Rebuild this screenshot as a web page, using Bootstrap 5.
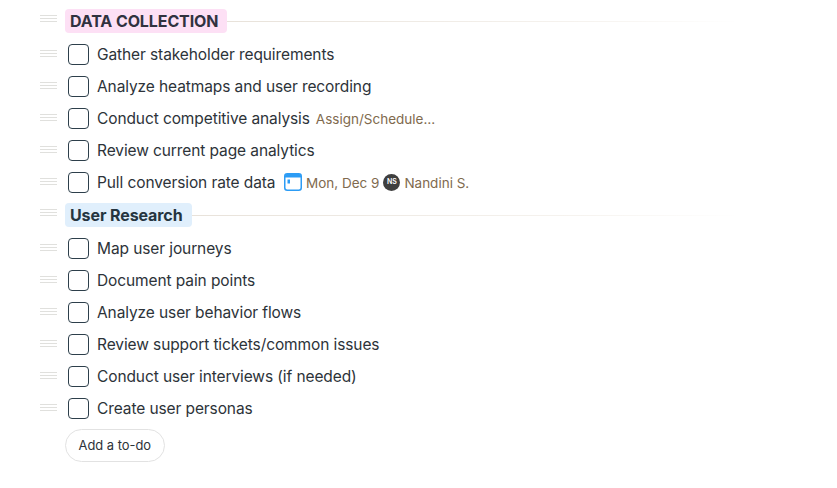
<!DOCTYPE html>
<html lang="en">
<head>
  <meta charset="UTF-8">
  <title>To-do list</title>
  <link href="https://cdn.jsdelivr.net/npm/bootstrap@5.3.3/dist/css/bootstrap.min.css" rel="stylesheet">
  <style>
    body { font-family: Inter, "Liberation Sans", sans-serif; color: #2d3339; font-size: 16px; background: #fff; }
    .todo-page { padding: 4px 0 0 40px; width: 740px; }
    .todo-row { height: 32px; }
    .head-row { height: 34px; }
    .grip { width: 17px; height: 7px; margin-right: 8px; flex: none; border-top: 1px solid #e0e0dd; border-bottom: 1px solid #e0e0dd; position: relative; top: -1px; }
    .grip::after { content: ""; position: absolute; left: 0; right: 0; top: 2px; height: 1px; background: #e0e0dd; }
    .head-row .grip { top: -3px; }
    .tick { width: 21px; height: 21px; margin: 0 8px 0 3px; flex: none; border: 1px solid #2d3f4b; border-radius: 4px; background: #fff; }
    .todo-label { font-size: 15.5px; line-height: 22px; letter-spacing: -.1px; white-space: nowrap; padding-top: 2px; }
    .meta { color: #806a4e; font-size: 13.5px; white-space: nowrap; padding-top: 2px; }
    .meta-first { margin-left: 6px; }
    .section-tag { font-size: 16px; font-weight: 700; line-height: 24px; padding: 0 9px 0 5px; border-radius: 4px; white-space: nowrap; letter-spacing: -.1px; }
    .tag-pink { background: #fde0f5; color: #30323f; }
    .tag-blue { background: #e0effc; color: #253540; }
    .fade-line { height: 1px; background: linear-gradient(to right, #e8e2da, #f6f3ef 70%, #fff); }
    .avatar { width: 17px; height: 17px; border-radius: 50%; background: #3f3f3f; color: #fff; font-size: 7px; font-weight: 600; margin: 1px 4px 0; }
    .cal-icon { flex: none; margin-left: 9px; margin-right: 3.5px; }
    .add-btn { --bs-btn-padding-x: 12.5px; --bs-btn-padding-y: 0; --bs-btn-font-size: 12.9px; --bs-btn-color: #2d3339; --bs-btn-border-color: #e2e2e2; --bs-btn-hover-color: #2d3339; --bs-btn-hover-bg: #f6f6f6; --bs-btn-hover-border-color: #e2e2e2; --bs-btn-border-radius: 17px; height: 33px; margin-left: 25px; margin-top: 5px; line-height: 31px; }
  </style>
</head>
<body>
  <div class="todo-page">

    <div class="d-flex align-items-center head-row">
      <span class="grip"></span>
      <span class="section-tag tag-pink">DATA COLLECTION</span>
      <div class="fade-line flex-grow-1"></div>
    </div>
    <div class="d-flex align-items-center todo-row"><span class="grip"></span><span class="tick"></span><span class="todo-label">Gather stakeholder requirements</span></div>
    <div class="d-flex align-items-center todo-row"><span class="grip"></span><span class="tick"></span><span class="todo-label">Analyze heatmaps and user recording</span></div>
    <div class="d-flex align-items-center todo-row"><span class="grip"></span><span class="tick"></span><span class="todo-label">Conduct competitive analysis</span><span class="meta meta-first">Assign/Schedule…</span></div>
    <div class="d-flex align-items-center todo-row"><span class="grip"></span><span class="tick"></span><span class="todo-label">Review current page analytics</span></div>
    <div class="d-flex align-items-center todo-row">
      <span class="grip"></span><span class="tick"></span><span class="todo-label">Pull conversion rate data</span>
      <svg class="cal-icon" width="18" height="18" viewBox="0 0 18 18" fill="none">
        <rect x=".75" y=".75" width="16.5" height="16.5" rx="2.5" fill="#fff" stroke="#2c9cf5" stroke-width="1.5"/>
        <path d="M1 3A2 2 0 0 1 3 1h12a2 2 0 0 1 2 2v1.5H1z" fill="#2c9cf5"/>
        <rect x="3.5" y="6.5" width="2.5" height="4" fill="#2c9cf5"/>
      </svg>
      <span class="meta">Mon, Dec 9</span>
      <span class="avatar d-inline-flex align-items-center justify-content-center">NS</span>
      <span class="meta">Nandini S.</span>
    </div>

    <div class="d-flex align-items-center head-row">
      <span class="grip"></span>
      <span class="section-tag tag-blue">User Research</span>
      <div class="fade-line flex-grow-1"></div>
    </div>
    <div class="d-flex align-items-center todo-row"><span class="grip"></span><span class="tick"></span><span class="todo-label">Map user journeys</span></div>
    <div class="d-flex align-items-center todo-row"><span class="grip"></span><span class="tick"></span><span class="todo-label">Document pain points</span></div>
    <div class="d-flex align-items-center todo-row"><span class="grip"></span><span class="tick"></span><span class="todo-label">Analyze user behavior flows</span></div>
    <div class="d-flex align-items-center todo-row"><span class="grip"></span><span class="tick"></span><span class="todo-label">Review support tickets/common issues</span></div>
    <div class="d-flex align-items-center todo-row"><span class="grip"></span><span class="tick"></span><span class="todo-label">Conduct user interviews (if needed)</span></div>
    <div class="d-flex align-items-center todo-row"><span class="grip"></span><span class="tick"></span><span class="todo-label">Create user personas</span></div>

    <button type="button" class="btn add-btn">Add a to-do</button>
  </div>
  <script src="https://cdn.jsdelivr.net/npm/bootstrap@5.3.3/dist/js/bootstrap.bundle.min.js"></script>
</body>
</html>
